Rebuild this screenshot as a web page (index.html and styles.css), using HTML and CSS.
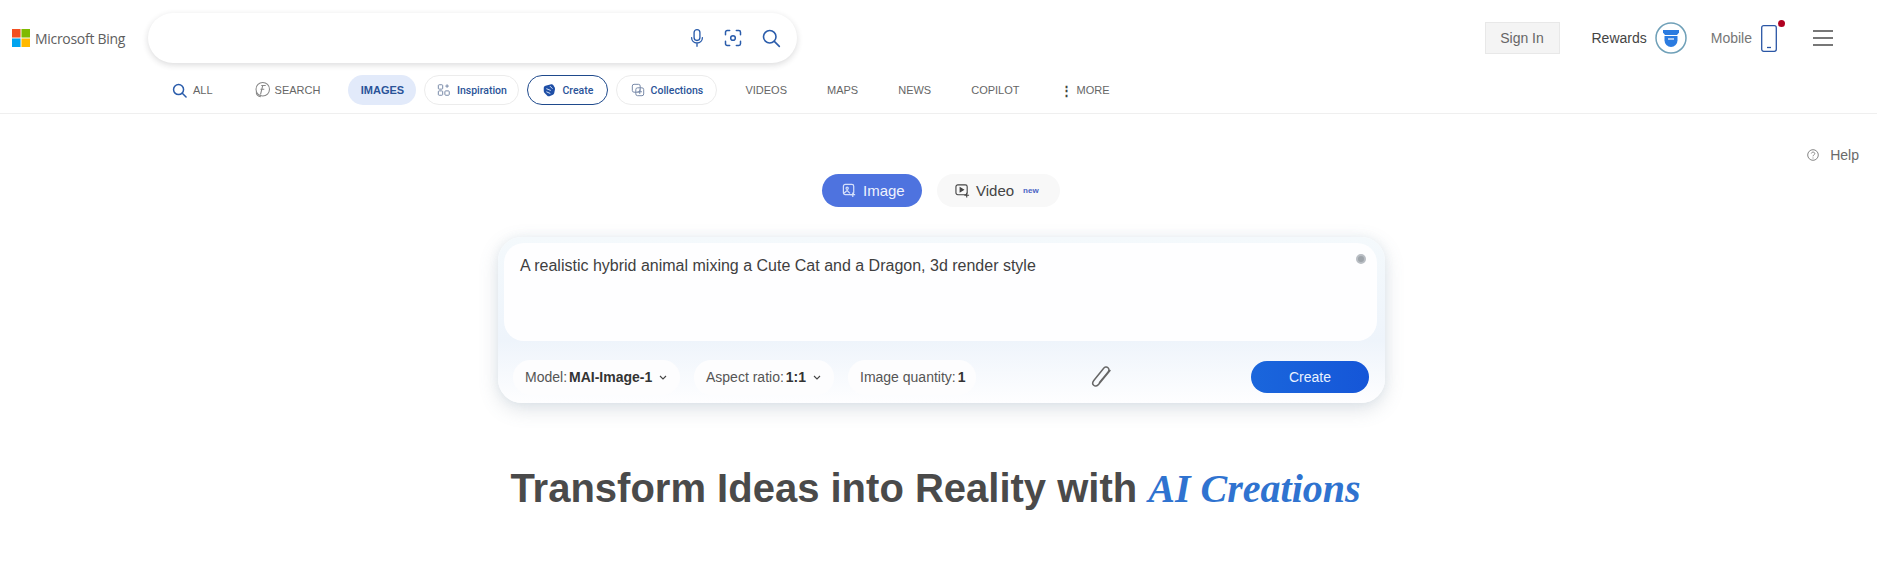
FILE: index.html
```html
<!DOCTYPE html>
<html lang="en">

<head>
    <meta charset="UTF-8">
    <meta name="viewport" content="width=device-width, initial-scale=1.0">
    <title>Bing Image Creator</title>
    <link rel="stylesheet" href="styles.css">
</head>

<body>
    <header class="header">
        <div class="top-row">
            <a class="logo">
                <svg class="logo-mark" viewBox="0 0 19 19">
                    <rect x="0" y="0" width="9" height="9" fill="#f25022" />
                    <rect x="10" y="0" width="9" height="9" fill="#7fba00" />
                    <rect x="0" y="10" width="9" height="9" fill="#00a4ef" />
                    <rect x="10" y="10" width="9" height="9" fill="#ffb900" />
                </svg>
                <span>Microsoft Bing</span>
            </a>
            <div class="search-box">
                <svg class="search-icon" viewBox="0 0 20 24" fill="none" stroke="#2a5cab" stroke-width="1.6" stroke-linecap="round">
                    <rect x="6.5" y="2" width="7" height="13" rx="3.5" />
                    <path d="M3.5 11.500c0 4 3 6.500 6.500 6.500s6.500-2.500 6.500-6.500M10 18v4" />
                </svg>
                <svg class="search-icon" viewBox="0 0 24 24" fill="none" stroke="#2a5cab" stroke-width="1.8" stroke-linecap="round">
                    <path d="M3 8V5a2 2 0 0 1 2-2h3M16 3h3a2 2 0 0 1 2 2v3M21 16v3a2 2 0 0 1-2 2h-3M8 21H5a2 2 0 0 1-2-2v-3" />
                    <circle cx="12" cy="12" r="2.800" />
                </svg>
                <svg class="search-icon" viewBox="0 0 24 24" fill="none" stroke="#2a5cab" stroke-width="1.900" stroke-linecap="round">
                    <circle cx="10.500" cy="10.500" r="7.500" />
                    <path d="M16 16l6 6" />
                </svg>
            </div>
            <div class="account">
                <button class="sign-in">Sign In</button>
                <span class="rewards">Rewards</span>
                <svg class="rewards-icon" viewBox="0 0 32 32">
                    <circle cx="16" cy="16" r="15" fill="#fff" stroke="#6fa0b8" stroke-width="1.500" />
                    <path d="M8 8h16v2.500l-2 2.500H10L8 10.500z" fill="#2b7be0" />
                    <path d="M9.500 14h13v4.500a6.500 6.500 0 0 1-13 0z" fill="#2b7be0" />
                    <path d="M13 17h6" stroke="#fff" stroke-width="1.200" />
                </svg>
                <span class="mobile">Mobile</span>
                <span class="phone">
                    <svg class="phone-icon" viewBox="0 0 16 27" fill="none" stroke="#2a56a5" stroke-width="1.300">
                        <rect x="0.700" y="0.700" width="14.600" height="25.600" rx="2" />
                        <path d="M6 22.500h4" />
                    </svg>
                    <span class="red-dot"></span>
                </span>
                <div class="burger">
                    <span></span>
                    <span></span>
                    <span></span>
                </div>
            </div>
        </div>
        <nav class="nav">
            <a class="nav-item">
                <svg class="nav-icon" viewBox="0 0 24 24" fill="none" stroke="#2a5cab" stroke-width="2.400" stroke-linecap="round">
                    <circle cx="10.500" cy="10.500" r="8" />
                    <path d="M16.500 16.500l6 6" />
                </svg>
                ALL
            </a>
            <a class="nav-item">
                <svg class="nav-icon wide" viewBox="0 0 24 24" fill="none" stroke="#888" stroke-width="1.400">
                    <circle cx="13" cy="11" r="9" />
                    <path d="M4.500 14a6 6 0 0 0 6 7M11 6h6M10 11h5M13 6l-3 12" />
                </svg>
                SEARCH
            </a>
            <div class="nav-pills">
                <a class="pill pill-active">IMAGES</a>
                <a class="pill inspiration">
                    <svg class="pill-icon" viewBox="0 0 16 16" fill="none" stroke="#7485a5" stroke-width="1.100">
                        <rect x="1.500" y="2" width="5" height="5" rx="1" />
                        <rect x="1.500" y="9" width="5" height="5" rx="1" />
                        <rect x="9" y="9" width="5" height="5" rx="1" />
                        <path d="M11.500 1.500v4M9.500 3.500h4" />
                    </svg>
                    Inspiration
                </a>
                <a class="pill pill-outline">
                    <svg class="pill-icon" viewBox="0 0 16 16">
                        <path d="M2 5.500Q2 3.500 4 3L10.500 1.500Q12 1.200 13 2.500L14.500 5Q15 6 14.800 7.500L14 11.500Q13.700 13 12.500 13.500L8.500 15Q7 15.500 6 14.500L3 11.500Q2 10.500 2 9z" fill="#1f4fa6" />
                        <path d="M5 6.500l5 2M5 10l4.500 2M9 3.500l3 3" stroke="#dfe8fa" stroke-width="1.100" />
                    </svg>
                    Create
                </a>
                <a class="pill collections">
                    <svg class="pill-icon" viewBox="0 0 16 16" fill="none" stroke="#7485a5" stroke-width="1.100">
                        <rect x="1.500" y="1.500" width="9" height="9" rx="2" />
                        <rect x="5.500" y="5.500" width="9" height="9" rx="2" />
                        <path d="M10 7.500v5M7.500 10h5" />
                    </svg>
                    Collections
                </a>
            </div>
            <a class="nav-item">VIDEOS</a>
            <a class="nav-item">MAPS</a>
            <a class="nav-item">NEWS</a>
            <a class="nav-item">COPILOT</a>
            <a class="nav-item more"><span class="dots">&#8942;</span>MORE</a>
        </nav>
    </header>

    <main class="main">
        <div class="help">
            <svg class="help-icon" viewBox="0 0 12 12" fill="none" stroke="#777" stroke-width="0.900">
                <circle cx="6" cy="6" r="5.300" />
                <path d="M4.300 4.500c.2-1 1-1.400 1.800-1.400s1.700.6 1.700 1.500c0 1.200-1.800 1.300-1.800 2.700M6 8.500v1" />
            </svg>
            Help
        </div>

        <div class="tabs">
            <a class="tab tab-active">
                <svg class="tab-icon" viewBox="0 0 16 16" fill="none" stroke="#d5e0fa" stroke-width="1.300">
                    <rect x="1.500" y="1.500" width="11" height="11" rx="2" />
                    <circle cx="5.500" cy="5.500" r="1.200" />
                    <path d="M2 11l3.500-3 3 3M11.500 10v5M9 12.500h5" />
                </svg>
                Image
            </a>
            <a class="tab">
                <svg class="tab-icon" viewBox="0 0 16 16" fill="none" stroke="#444" stroke-width="1.200">
                    <rect x="1" y="2" width="12" height="10.500" rx="2" />
                    <path d="M5.500 5l3.500 2.200-3.500 2.200z" fill="#444" />
                    <path d="M12.500 10.500v5M10 13h5" />
                </svg>
                Video
                <span class="new">new</span>
            </a>
        </div>

        <section class="card">
            <div class="prompt">
                <p>A realistic hybrid animal mixing a Cute Cat and a Dragon, 3d render style</p>
                <span class="clear"></span>
            </div>
            <div class="controls">
                <div class="chip model"><span>Model:</span><b>MAI-Image-1</b>
                    <svg class="chevron" viewBox="0 0 8 5" fill="none" stroke="#444" stroke-width="1.100"><path d="M1 1l3 3 3-3" /></svg>
                </div>
                <div class="chip aspect"><span>Aspect ratio:</span><b>1:1</b>
                    <svg class="chevron" viewBox="0 0 8 5" fill="none" stroke="#444" stroke-width="1.100"><path d="M1 1l3 3 3-3" /></svg>
                </div>
                <div class="chip quantity"><span>Image quantity:</span><b>1</b></div>
                <svg class="clip" viewBox="0 0 22 24" fill="none" stroke="#666" stroke-width="1.500" stroke-linecap="round">
                    <path d="M19 5.500L7.500 19.500c-1.500 1.800-3.500 1.900-4.800.8s-1.300-3 .1-4.800L12.500 3.500c1.300-1.600 3.200-1.900 4.500-.8s1.300 3-.1 4.600L8.500 17.500" />
                </svg>
                <button class="create">Create</button>
            </div>
        </section>

        <h1 class="title">Transform Ideas into Reality with <em>AI Creations</em></h1>
    </main>
</body>

</html>
```

FILE: styles.css
```css
* {
    margin: 0;
    padding: 0;
    box-sizing: border-box;
}

body {
    background-color: #fff;
    font-family: "Liberation Sans", Arial, sans-serif;
    color: #444;
    overflow: hidden;
}

.header {
    height: 114px;
    border-bottom: 1px solid #efefef;
}

.top-row {
    display: flex;
    align-items: center;
    height: 75px;
    padding: 1px 44px 0 12px;
}

.logo {
    display: flex;
    align-items: center;
    gap: 5px;
    width: 136px;
    font-family: "Open Sans", sans-serif;
    font-size: 14px;
    letter-spacing: -0.3px;
    color: #5e5e5e;
}

.logo-mark {
    width: 18px;
    height: 18px;
}

.search-box {
    display: flex;
    align-items: center;
    justify-content: flex-end;
    gap: 18px;
    width: 649px;
    height: 50px;
    padding-right: 16px;
    border-radius: 25px;
    background-color: #fff;
    box-shadow: 0 2px 6px rgba(32, 33, 36, 0.16);
}

.search-icon {
    width: 20px;
    height: 20px;
}

.search-icon:first-child {
    margin-right: -2px;
}

.account {
    display: flex;
    align-items: center;
    margin-left: auto;
}

.sign-in {
    width: 75px;
    height: 32px;
    margin-right: 32px;
    border: 1px solid #e8e8e8;
    background-color: #f4f4f4;
    font-family: "Liberation Sans", Arial, sans-serif;
    font-size: 14px;
    color: #666;
}

.rewards {
    font-size: 14px;
    color: #444;
}

.rewards-icon {
    width: 32px;
    height: 32px;
    margin: 0 24px 0 8px;
}

.mobile {
    font-size: 14px;
    color: #767676;
}

.phone {
    position: relative;
    display: flex;
    margin: 0 36px 0 9px;
}

.phone-icon {
    width: 16px;
    height: 27px;
}

.red-dot {
    position: absolute;
    top: -5px;
    right: -8px;
    width: 7px;
    height: 7px;
    border-radius: 50%;
    background-color: #b00020;
}

.burger {
    display: flex;
    flex-direction: column;
    gap: 5px;
    width: 20px;
}

.burger span {
    height: 2px;
    background-color: #777;
}

.nav {
    display: flex;
    align-items: center;
    height: 30px;
    padding-left: 152px;
    font-size: 11px;
}

.nav-item {
    display: flex;
    align-items: center;
    padding: 0 20px;
    color: #666;
}

.nav-icon {
    width: 15px;
    height: 15px;
    margin-right: 6px;
}

.nav-icon.wide {
    width: 18px;
    height: 18px;
    margin-right: 4px;
}

.dots {
    margin-right: 3px;
    font-size: 13px;
    font-weight: bold;
    color: #444;
}

.more {
    padding-left: 21px;
}

.nav-pills {
    display: flex;
    gap: 8px;
    margin: 0 8px;
}

.pill {
    display: flex;
    align-items: center;
    justify-content: center;
    gap: 6px;
    width: 81px;
    height: 30px;
    border: 1px solid #ececec;
    border-radius: 15px;
    font-family: Roboto, sans-serif;
    font-size: 10.5px;
    font-weight: 500;
    color: #2a5398;
}

.pill-active {
    width: 68px;
    border: none;
    background-color: #e2eafa;
    font-family: "Liberation Sans", Arial, sans-serif;
    font-size: 11px;
    font-weight: bold;
}

.inspiration {
    width: 95px;
}

.collections {
    width: 101px;
}

.pill-outline {
    border-color: #1f4a8c;
}

.pill-icon {
    width: 14px;
    height: 14px;
}

.main {
    display: flex;
    flex-direction: column;
    align-items: center;
}

.help {
    display: flex;
    align-items: center;
    align-self: flex-end;
    gap: 11px;
    height: 18px;
    margin: 32px 18px 10px 0;
    font-size: 14px;
    color: #6a6a6a;
}

.help-icon {
    width: 12px;
    height: 12px;
}

.tabs {
    display: flex;
    gap: 15px;
    margin-left: 5px;
}

.tab {
    display: flex;
    align-items: center;
    width: 123px;
    height: 33px;
    padding-left: 18px;
    border-radius: 17px;
    background-color: #f8f8f8;
    font-size: 15px;
    color: #444;
}

.tab-active {
    width: 100px;
    padding-left: 20px;
    background-color: #4e73df;
    color: #eef2fd;
}

.tab-icon {
    width: 15px;
    height: 15px;
    margin-right: 6px;
}

.new {
    margin-left: 9px;
    font-size: 8px;
    font-weight: bold;
    color: #4a63c4;
}

.card {
    width: 887px;
    height: 166px;
    margin: 30px 0 0 6px;
    padding: 6px 8px 0 6px;
    border-radius: 24px;
    background: linear-gradient(180deg, #f4f9fc 0%, #eef4fb 62%, #fefeff 100%);
    box-shadow: 0 6px 20px rgba(90, 110, 130, 0.2), 0 0 10px rgba(120, 170, 200, 0.1);
}

.prompt {
    position: relative;
    height: 98px;
    padding: 13px 16px;
    border-radius: 20px;
    background-color: #fefeff;
    font-size: 16px;
    line-height: 20px;
    color: #3f3f3f;
}

.clear {
    position: absolute;
    top: 11px;
    right: 11px;
    width: 10px;
    height: 10px;
    border: 2px solid #b9bec4;
    border-radius: 50%;
    background-color: #9ea4aa;
}

.controls {
    display: flex;
    align-items: center;
    height: 62px;
    padding: 10px 8px 0 9px;
}

.chip {
    display: flex;
    align-items: center;
    flex-shrink: 0;
    height: 35px;
    padding: 0 12px;
    border-radius: 17px;
    background-color: #fdfdfe;
    font-size: 14px;
    white-space: nowrap;
    color: #555;
}

.chip b {
    margin-left: 2px;
    color: #333;
}

.model {
    width: 167px;
}

.aspect {
    width: 140px;
    margin-left: 14px;
}

.quantity {
    width: 128px;
    margin-left: 14px;
}

.chevron {
    width: 8px;
    height: 5px;
    margin-left: 7px;
}

.clip {
    width: 22px;
    height: 24px;
    margin-left: 115px;
}

.create {
    width: 118px;
    height: 32px;
    margin-left: auto;
    border: none;
    border-radius: 16px;
    background: linear-gradient(90deg, #1a66dc, #1556d8);
    font-family: "Liberation Sans", Arial, sans-serif;
    font-size: 14px;
    color: #eaf2ff;
}

.title {
    margin: 62px 0 0 -6px;
    font-size: 40px;
    font-weight: bold;
    color: #4a4a4a;
    white-space: nowrap;
}

.title em {
    font-family: "Liberation Serif", "Times New Roman", serif;
    font-style: italic;
    color: #2f73d0;
}
```
